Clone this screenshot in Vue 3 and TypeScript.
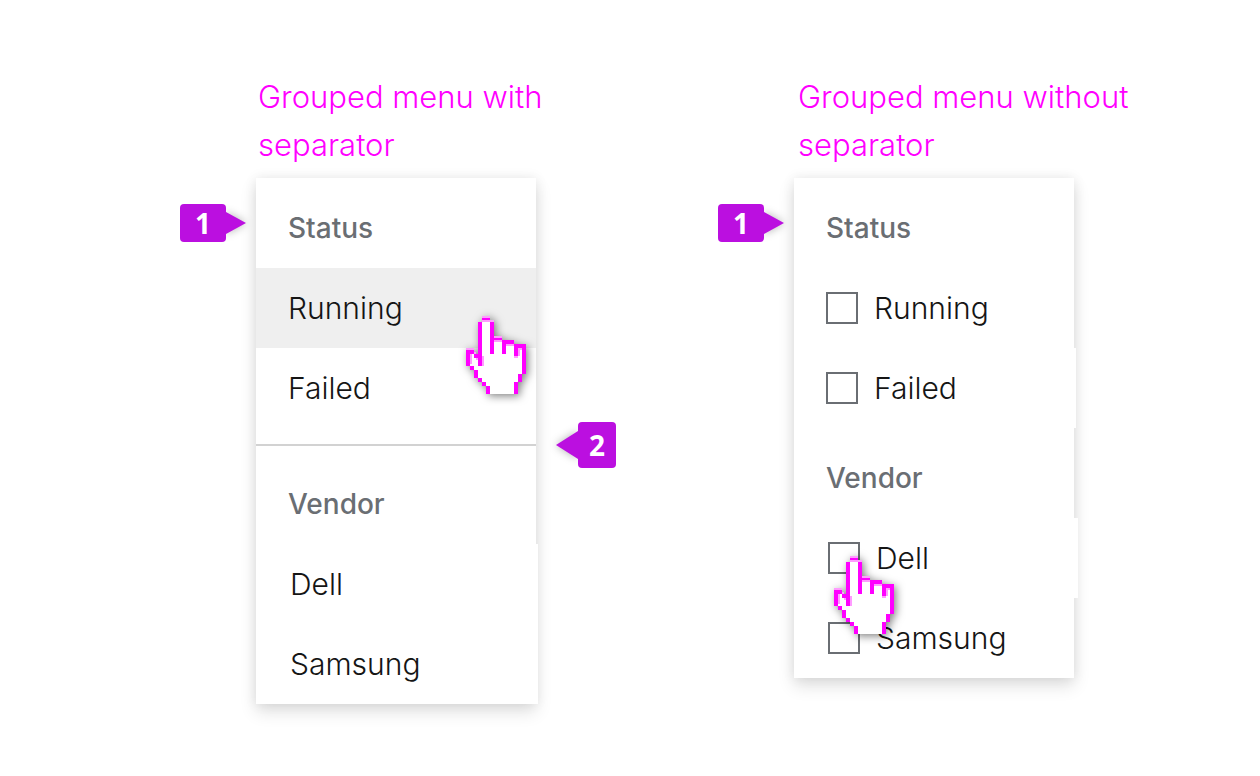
<script setup lang="ts">
interface Item {
  label: string
  active?: boolean
  cursor?: boolean
  shift?: boolean
  spill?: 'small' | 'large'
}
interface Group {
  title: string
  items: Item[]
}
interface Example {
  id: string
  caption: string
  separated: boolean
  groups: Group[]
}

const examples: Example[] = [
  {
    id: 'plain',
    caption: 'Grouped menu with separator',
    separated: true,
    groups: [
      { title: 'Status', items: [{ label: 'Running', active: true, cursor: true }, { label: 'Failed' }] },
      {
        title: 'Vendor',
        items: [
          { label: 'Dell', shift: true, spill: 'small' },
          { label: 'Samsung', shift: true, spill: 'small' },
        ],
      },
    ],
  },
  {
    id: 'check',
    caption: 'Grouped menu without separator',
    separated: false,
    groups: [
      { title: 'Status', items: [{ label: 'Running' }, { label: 'Failed', spill: 'small' }] },
      {
        title: 'Vendor',
        items: [
          { label: 'Dell', shift: true, spill: 'large', cursor: true },
          { label: 'Samsung', shift: true },
        ],
      },
    ],
  },
]

const rowClass = (item: Item) => [
  'row',
  item.spill ? `spill-${item.spill}` : '',
  { active: item.active, shift: item.shift },
]
</script>

<template>
  <main class="page">
    <section v-for="ex in examples" :key="ex.id" class="example" :class="ex.id">
      <h2 class="caption">{{ ex.caption }}</h2>
      <div class="marker marker-right">
        <span class="marker-box">1</span>
        <svg class="marker-arrow" width="20" height="22" viewBox="0 0 20 22" aria-hidden="true">
          <path d="M0 0 20 11 0 22z" fill="#bb0fe0" />
        </svg>
      </div>
      <div class="panel">
        <template v-for="(group, gi) in ex.groups" :key="group.title">
          <div v-if="ex.separated && gi > 0" class="separator">
            <div class="marker marker-left">
              <svg class="marker-arrow" width="22" height="28" viewBox="0 0 22 28" aria-hidden="true">
                <path d="M22 0 0 14 22 28z" fill="#bb0fe0" />
              </svg>
              <span class="marker-box tall">2</span>
            </div>
          </div>
          <h3 class="group-title">{{ group.title }}</h3>
          <ul class="list">
            <li v-for="item in group.items" :key="item.label" class="item">
              <button v-if="ex.separated" type="button" :class="rowClass(item)">{{ item.label }}</button>
              <label v-else :class="rowClass(item)">
                <input class="box" type="checkbox" />
                <span>{{ item.label }}</span>
              </label>
              <svg v-if="item.cursor" class="cursor" width="60" height="78" viewBox="0 0 30 39" shape-rendering="crispEdges" aria-hidden="true">
                <path fill="#fff" d="M8 2h4v9h6v2h6v2h5v14h-2v4h-2v6H11v-4H9v-2H7v-2H5v-4H3v-2H1v-7h4v3h3z" />
                <path fill="#ff9bff" d="M8 0h4v1H8zM8 2h4v1H8zM12 2h2v1h-2zM14 10h4v1h-4zM14 12h4v1h-4zM20 14h4v1h-4zM26 16h2v1h-2zM26 17h1v3h-1zM24 20h2v1h-2zM0 16h4v1H0zM4 18h1v1H4zM2 19h1v5H2zM8 20h1v5H8zM5 21h1v1H5z" />
                <path fill="#f0f" d="M8 1h4v1H8zM6 3h2v22H6zM12 3h2v16h-2zM14 11h4v1h-4zM18 12h6v2h-6zM18 14h2v5h-2zM24 14h6v2h-6zM24 16h2v4h-2zM28 16h2v13h-2zM26 29h2v4h-2zM24 33h2v6h-2zM0 17h4v2H0zM0 19h2v6H0zM4 19h2v2H4zM2 25h2v2H2zM4 27h2v4H4zM6 31h2v2H6zM8 33h2v2H8zM10 35h2v4h-2z" />
              </svg>
            </li>
          </ul>
        </template>
      </div>
    </section>
  </main>
</template>

<style>
body {
  background: #fff;
}
</style>

<style scoped>
.page {
  display: grid;
  grid-template-columns: repeat(2, minmax(0, 1fr));
  align-items: start;
  padding: 73px 4px 72px 180px;
  color: #151515;
  font-family: Inter, "Open Sans", sans-serif;
  font-weight: 350;
}
.example {
  display: grid;
  grid-template-columns: 76px minmax(0, 280px) minmax(0, 80px);
  row-gap: 9px;
  align-items: start;
}
.caption {
  grid-column: 2 / 4;
  margin: 0;
  padding-left: 2px;
  color: #f0f;
  font-size: 31px;
  font-weight: 300;
  line-height: 48px;
}
.check .caption {
  padding-left: 4px;
}
.panel {
  background: #fff;
  box-shadow: 0 8px 16px rgba(3, 3, 3, 0.12), 0 0 12px rgba(3, 3, 3, 0.08);
}
.group-title {
  margin: 0;
  padding: 30px 32px 20px;
  color: #6a6e73;
  font-size: 28px;
  font-weight: 550;
  line-height: 40px;
}
.list {
  margin: 0;
  padding: 0;
  list-style: none;
}
.item {
  position: relative;
  display: flex;
}
.row {
  display: flex;
  flex: 1;
  align-items: center;
  gap: 16px;
  height: 80px;
  border: 0;
  padding: 0 32px;
  background: #fff;
  color: inherit;
  font: inherit;
  font-size: 30px;
  line-height: 48px;
  text-align: left;
}
.row.active {
  background: #efefef;
}
.row.shift {
  padding-left: 34px;
}
.row.spill-small {
  margin-right: -2px;
}
.row.spill-large {
  margin-right: -4px;
}
.box {
  appearance: none;
  flex: none;
  width: 32px;
  height: 32px;
  margin: 0;
  border: 2px solid #6a6e73;
  background: #fff;
}
.separator {
  position: relative;
  height: 2px;
  margin: 16px 0 8px;
  background: #d2d2d2;
}
.marker {
  display: flex;
  align-items: center;
}
.marker-right {
  margin-top: 26px;
}
.marker-left {
  position: absolute;
  top: -22px;
  left: calc(100% + 20px);
}
.marker-box {
  position: relative;
  z-index: 1;
  width: 46px;
  height: 38px;
  border-radius: 4px;
  background: #bb0fe0;
  color: #fff;
  font-family: "Open Sans", sans-serif;
  font-size: 28px;
  font-weight: 700;
  line-height: 38px;
  text-align: center;
}
.marker-box.tall {
  width: 38px;
  height: 46px;
  line-height: 46px;
}
.marker-arrow {
  overflow: visible;
  filter: drop-shadow(0 0 4px rgba(0, 0, 0, 0.3));
}
.cursor {
  position: absolute;
  z-index: 1;
  top: 48px;
  left: 210px;
  overflow: visible;
  filter: drop-shadow(2px 2px 4px rgba(0, 0, 0, 0.5));
  pointer-events: none;
}
.check .cursor {
  top: 38px;
  left: 40px;
}
</style>
